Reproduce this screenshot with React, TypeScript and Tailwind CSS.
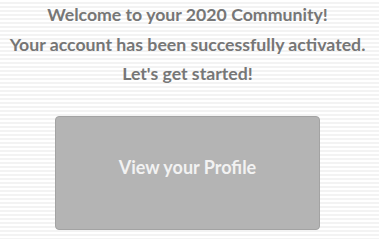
export default function App() {
  return (
    <div className="h-[239px] w-[379px] overflow-hidden bg-[repeating-linear-gradient(180deg,#ffffff_0px,#ffffff_2px,#f3f3f3_2px,#f3f3f3_4px)] font-['Lato',sans-serif]">
      <div className="flex w-[375px] flex-col items-center">
        <div className="text-center text-[17.7px] font-bold leading-[29.5px] text-[#767676]">
          <p>Welcome to your 2020 Community!</p>
          <p>Your account has been successfully activated.</p>
          <p>Let's get started!</p>
        </div>
        <button className="mt-[27px] flex h-[114px] w-[265px] items-center justify-center rounded-[4px] border border-[#a3a3a3] bg-[#b4b4b4] pb-[10px] text-[18px] font-bold text-[#f2f2f2]">
          View your Profile
        </button>
      </div>
    </div>
  );
}
